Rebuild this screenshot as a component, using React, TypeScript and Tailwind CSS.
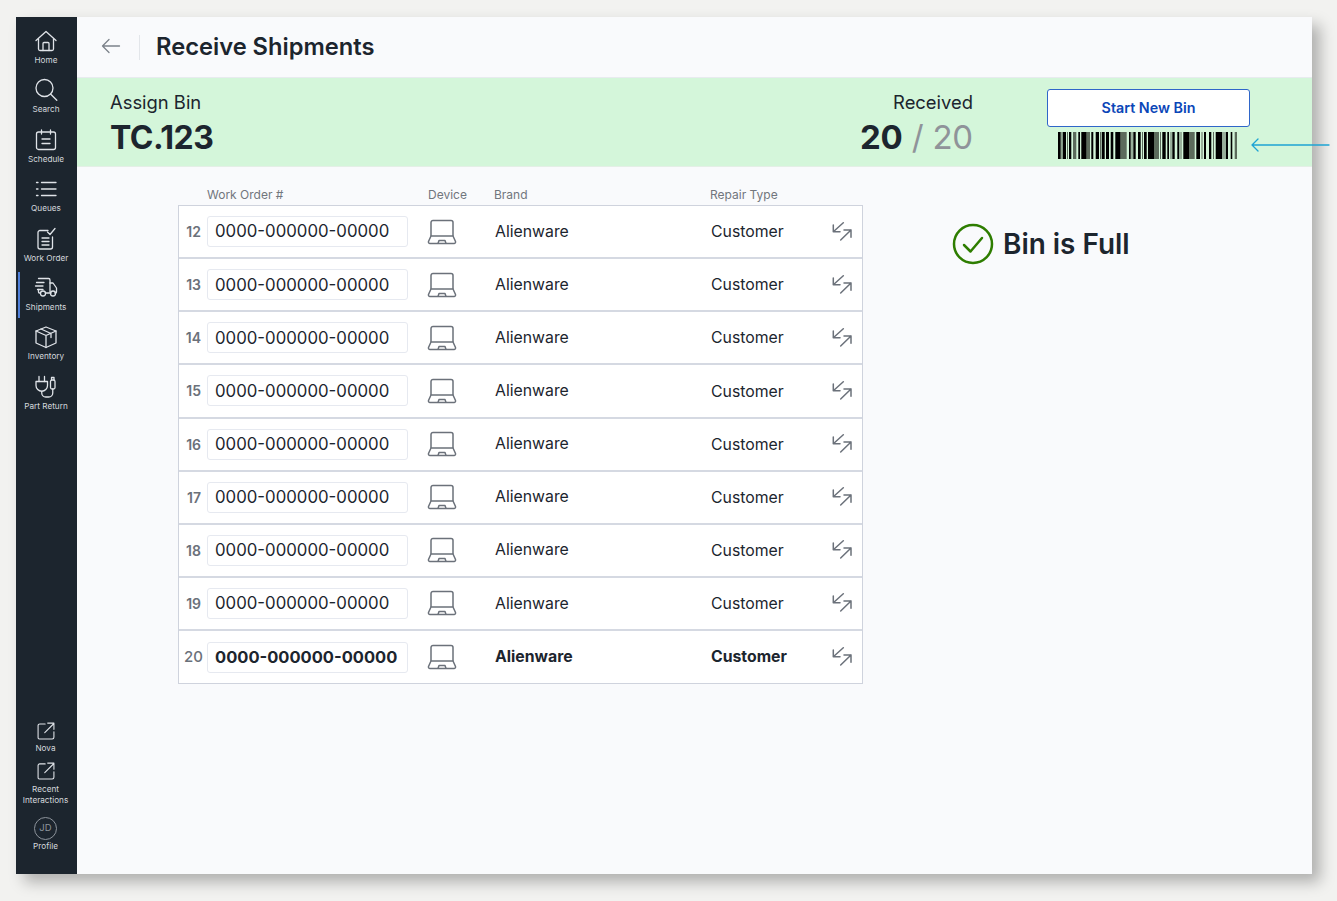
const rows = [12, 13, 14, 15, 16, 17, 18, 19, 20];

const Svg = ({ children, className = "" }: { children: React.ReactNode; className?: string }) => (
  <svg viewBox="0 0 24 24" fill="none" stroke="currentColor" strokeWidth="1.3" strokeLinecap="round" strokeLinejoin="round" className={className}>
    {children}
  </svg>
);

const icon = "w-[24px] h-[24px] text-[#dfe3e8]";

const HomeIcon = () => (
  <Svg className={icon}>
    <path d="M2 11.500 12 2.500l10 9" />
    <path d="M4.500 10v10a1.500 1.500 0 0 0 1.500 1.500h12a1.500 1.500 0 0 0 1.500-1.500V10" />
    <path d="M9 21.500v-7a1 1 0 0 1 1-1h4a1 1 0 0 1 1 1v7" />
  </Svg>
);
const SearchIcon = () => (
  <Svg className={icon}>
    <circle cx="10.500" cy="10" r="8.500" />
    <path d="m16.800 16.300 6 6" />
  </Svg>
);
const ScheduleIcon = () => (
  <Svg className={icon}>
    <rect x="2.500" y="4" width="19" height="17.500" rx="2" />
    <path d="M7.500 2v4M16.500 2v4M8 11h8M8 15.500h8" />
  </Svg>
);
const QueuesIcon = () => (
  <Svg className={icon}>
    <path d="M7.500 5.500H22M7.500 12H22M7.500 18.500H22M2.500 5.500h1.500M2.500 12h1.500M2.500 18.500h1.500" />
  </Svg>
);
const WorkOrderIcon = () => (
  <Svg className={icon}>
    <path d="M14 3.500H6a2 2 0 0 0-2 2V20a2 2 0 0 0 2 2h10.500a2 2 0 0 0 2-2V10" />
    <path d="M8 11h7M8 14.500h7M8 18h7" />
    <path d="m13.500 5 2.500 2.500L21 1.500" />
  </Svg>
);
const ShipmentsIcon = () => (
  <Svg className={icon}>
    <path d="M4.500 2.500h10a1.500 1.500 0 0 1 1.500 1.500v12M2.500 6.500H10M1.500 10H9M3.500 13.500H9" />
    <path d="M4.500 13.500V16a1 1 0 0 0 1 1H6M12 17h5" />
    <path d="M16 7h3l3.500 5v4a1 1 0 0 1-1 1H21" />
    <circle cx="9" cy="17.500" r="2.500" />
    <circle cx="19" cy="17.500" r="2.500" />
  </Svg>
);
const InventoryIcon = () => (
  <Svg className={icon}>
    <path d="M12 2 2 6v12l10 4.500L22 18V6L12 2Z" />
    <path d="m2 6 10 4.500L22 6M12 10.500v12M7 4l10 4.500v4" />
  </Svg>
);
const PartReturnIcon = () => (
  <Svg className={icon}>
    <path d="M5 1.500v5M10.500 1.500v5" />
    <path d="M2 6.500h11.500v4a5.750 5.750 0 0 1-11.500 0v-4Z" />
    <path d="M7.750 16.500v1.500a4 4 0 0 0 4 4h3a4 4 0 0 0 4-4v-4" />
    <rect x="16.500" y="5" width="4.500" height="9" rx="1.500" />
    <path d="M17.500 5V2.500h2.500V5" />
  </Svg>
);
const ExternalIcon = () => (
  <Svg className="w-[20px] h-[20px] text-[#dfe3e8]">
    <path d="M11 3.500H4.500a2 2 0 0 0-2 2V20a1.500 1.500 0 0 0 1.500 1.500h15.500a2 2 0 0 0 2-2V13" />
    <path d="M10.500 14 21.500 3M14 2.500h7.500V10" />
  </Svg>
);

const NavItem = ({ label, children, active }: { label: string; children: React.ReactNode; active?: boolean }) => (
  <div className="relative h-[49.400px] flex flex-col items-center pr-[1px]">
    {active && <div className="absolute left-[2px] top-[-4px] w-[2px] h-[46px] bg-[#4f7fd9]" />}
    {children}
    <span className="mt-[1px] text-[8.200px] leading-[12px] text-[#d4d8dd] whitespace-nowrap">{label}</span>
  </div>
);

const Laptop = () => (
  <svg viewBox="0 0 30 26" fill="none" stroke="#6b717a" strokeWidth="1.500" strokeLinejoin="round" className="w-[30px] h-[26px]">
    <path d="M4 17V3.500A2 2 0 0 1 6 1.500h18a2 2 0 0 1 2 2V17" />
    <path d="M4 17h22l2.500 5.500a1.500 1.500 0 0 1-1.500 2H3a1.500 1.500 0 0 1-1.500-2L4 17Z" />
    <path d="M11 24.500 12 21.500h6l1 3" />
  </svg>
);

const SwapIcon = () => (
  <svg viewBox="0 0 22 20" fill="none" stroke="#6b717a" strokeWidth="1.500" strokeLinecap="round" strokeLinejoin="round" className="w-[22px] h-[20px]">
    <path d="M12.300 0.800 2.300 9.700M2.300 3v6.700H9" />
    <path d="M20 8 9.700 18M13 8h7v7.300" />
  </svg>
);

const B = "#000";
const G = "#5c6b5c";
const bars: [number, number, string][] = [
  [0,2.700,B],[3.400,0.800,G],[4.700,3.300,B],[9,1,G],[11,2.300,B],[15,3.300,G],[20.300,1.700,B],[23.300,5.400,B],[28.700,3.300,G],[33.300,2,B],
  [37.700,3.300,B],[42,1,G],[43.700,3,B],[48,3,B],[52.700,2.600,B],[57.300,5.400,B],[62.700,6,G],[71,1.700,B],[73.500,1,G],[75.300,2.400,B],
  [80,2.700,B],[84,1,G],[86,2.700,B],[90,6,B],[96,5,G],[102,1,G],[104.300,3.400,B],[109.300,1.700,B],[112.500,1,G],[114.300,2.400,B],
  [119.300,2,B],[122.500,1,G],[125.300,5.700,B],[131,5.700,G],[138.300,3.700,B],[143.500,1,G],[146,2,B],[151,2.300,B],[155,1,G],[157.700,6.600,B],
  [165.500,1,G],[167.700,2.300,B],[172.700,1.600,B],[176.700,2.300,G],
];

const Row = ({ n, bold }: { n: number; bold: boolean }) => (
  <div className="h-[53.125px] last:h-[52px] flex items-center border-b-2 border-[#d5d9e2] last:border-b-0 bg-white">
    <span className={`shrink-0 text-right text-[#6b717a] ${bold ? "w-[24px] text-[15px] font-medium" : "w-[22px] text-[14px] font-semibold"}`}>{n}</span>
    <div className={`w-[201px] h-[31px] shrink-0 flex items-center px-[7px] rounded-[3px] border border-[#e6e9f0] bg-white text-[#1c252e] whitespace-nowrap ${bold ? "ml-[4px] text-[16.500px] font-bold" : "ml-[6px] pt-[1px] text-[16.800px]"}`}>
      0000-000000-00000
    </div>
    <div className="ml-[19px] w-[30px] shrink-0 flex"><Laptop /></div>
    <span className={`ml-[38px] w-[216px] shrink-0 text-[15.800px] text-[#1c252e] ${bold ? "font-bold" : ""}`}>Alienware</span>
    <span className={`w-[120px] shrink-0 text-[15.800px] text-[#1c252e] ${bold ? "font-bold" : "mt-[1px]"}`}>Customer</span>
    <SwapIcon />
  </div>
);

export default function App() {
  return (
    <div className="relative w-[1337px] h-[901px] overflow-hidden bg-[#f2f2f0] pl-[16px] pt-[17px] font-['Inter',sans-serif]">
      <div className="w-[1296px] h-[857px] flex bg-[#f9fafc] shadow-[8px_8px_14px_rgba(0,0,0,0.28)]">
        <aside className="w-[61px] shrink-0 h-full bg-[#1c252e] flex flex-col pt-[12px] pb-[22px]">
          <NavItem label="Home"><HomeIcon /></NavItem>
          <NavItem label="Search"><SearchIcon /></NavItem>
          <NavItem label="Schedule"><ScheduleIcon /></NavItem>
          <NavItem label="Queues"><QueuesIcon /></NavItem>
          <NavItem label="Work Order"><WorkOrderIcon /></NavItem>
          <NavItem label="Shipments" active><ShipmentsIcon /></NavItem>
          <NavItem label="Inventory"><InventoryIcon /></NavItem>
          <NavItem label="Part Return"><PartReturnIcon /></NavItem>
          <div className="mt-auto flex flex-col items-center pr-[2px]">
            <ExternalIcon />
            <span className="mt-[1px] text-[8.200px] leading-[12px] text-[#d4d8dd]">Nova</span>
            <div className="mt-[7px]"><ExternalIcon /></div>
            <span className="mt-[3px] text-[8.200px] leading-[11px] text-[#d4d8dd] text-center">Recent<br />Interactions</span>
            <div className="mt-[11px] w-[23px] h-[23px] rounded-full border border-[#8d949c] flex items-center justify-center text-[9.500px] text-[#8d949c]">JD</div>
            <span className="text-[8.200px] leading-[12px] text-[#d4d8dd]">Profile</span>
          </div>
        </aside>

        <main className="flex-1 min-w-0 flex flex-col">
          <header className="h-[61px] shrink-0 flex items-center border-b border-[#e8ebef]">
            <svg viewBox="0 0 20 16" fill="none" stroke="#7c828a" strokeWidth="1.300" strokeLinecap="round" strokeLinejoin="round" className="ml-[24px] mb-[2px] w-[20px] h-[16px]">
              <path d="M18.500 8H1.500M8 1.500 1.500 8 8 14.500" />
            </svg>
            <div className="ml-[18px] w-px h-[25px] bg-[#e3e6ea]" />
            <h1 className="ml-[16px] text-[23.700px] font-semibold text-[#1c252e]">Receive Shipments</h1>
          </header>

          <section className="h-[89px] shrink-0 bg-[#d4f6da] flex border-b border-[#e4efe6]">
            <div className="ml-[33px] pt-[13px]">
              <div className="text-[18.400px] leading-[22px] text-[#1c252e]">Assign Bin</div>
              <div className="mt-[5px] text-[32px] tracking-[-0.5px] leading-[40px] font-bold text-[#1c252e]">TC.123</div>
            </div>
            <div className="ml-auto pt-[13px] flex flex-col items-end">
              <div className="text-[18.400px] leading-[22px] text-[#1c252e]">Received</div>
              <div className="mt-[4px] text-[33px] tracking-[-0.2px] leading-[40px] whitespace-nowrap">
                <span className="font-bold text-[#1c252e]">20</span>
                <span className="text-[#8f9399]"> / 20</span>
              </div>
            </div>
            <div className="ml-[74px] mr-[62px] pt-[11px] w-[203px] flex flex-col items-start">
              <button className="w-[203px] h-[38px] shrink-0 rounded-[3px] border border-[#2f66c9] bg-white text-[14.300px] font-semibold text-[#0b46b8]">Start New Bin</button>
              <svg viewBox="0 0 179 27" className="mt-[5px] ml-[11px] w-[179px] h-[27px]">
                {bars.map(([x, w, c]) => (
                  <rect key={x} x={x} y="0" width={w} height="27" fill={c} />
                ))}
              </svg>
            </div>
          </section>

          <section className="flex items-start pl-[101px]">
            <div className="w-[685px] shrink-0">
              <div className="h-[38px] flex items-end pb-[2px] text-[12px] leading-[16px] text-[#71767d]">
                <span className="ml-[29px] w-[221px]">Work Order #</span>
                <span className="w-[66px]">Device</span>
                <span className="w-[216px]">Brand</span>
                <span>Repair Type</span>
              </div>
              <div className="border border-[#cfd3dd]">
                {rows.map((n) => <Row key={n} n={n} bold={n === 20} />)}
              </div>
            </div>
            <div className="ml-[89px] mt-[55px] flex items-center">
              <svg viewBox="0 0 42 42" fill="none" className="w-[42px] h-[42px]">
                <circle cx="21" cy="21" r="19" stroke="#2e7d00" strokeWidth="2.500" />
                <path d="m12 22 6.500 6.500L30 15" stroke="#2e7d00" strokeWidth="2.500" strokeLinecap="round" strokeLinejoin="round" />
              </svg>
              <span className="ml-[9px] mt-[2px] text-[27.900px] font-semibold text-[#1c252e] whitespace-nowrap">Bin is Full</span>
            </div>
          </section>
        </main>
      </div>

      <svg viewBox="0 0 80 14" fill="none" stroke="#1ea4d4" strokeWidth="1.300" strokeLinecap="round" strokeLinejoin="round" className="absolute left-[1251px] top-[138px] w-[80px] h-[14px]">
        <path d="M78 7H1M7 1 1 7l6 6" />
      </svg>
    </div>
  );
}
